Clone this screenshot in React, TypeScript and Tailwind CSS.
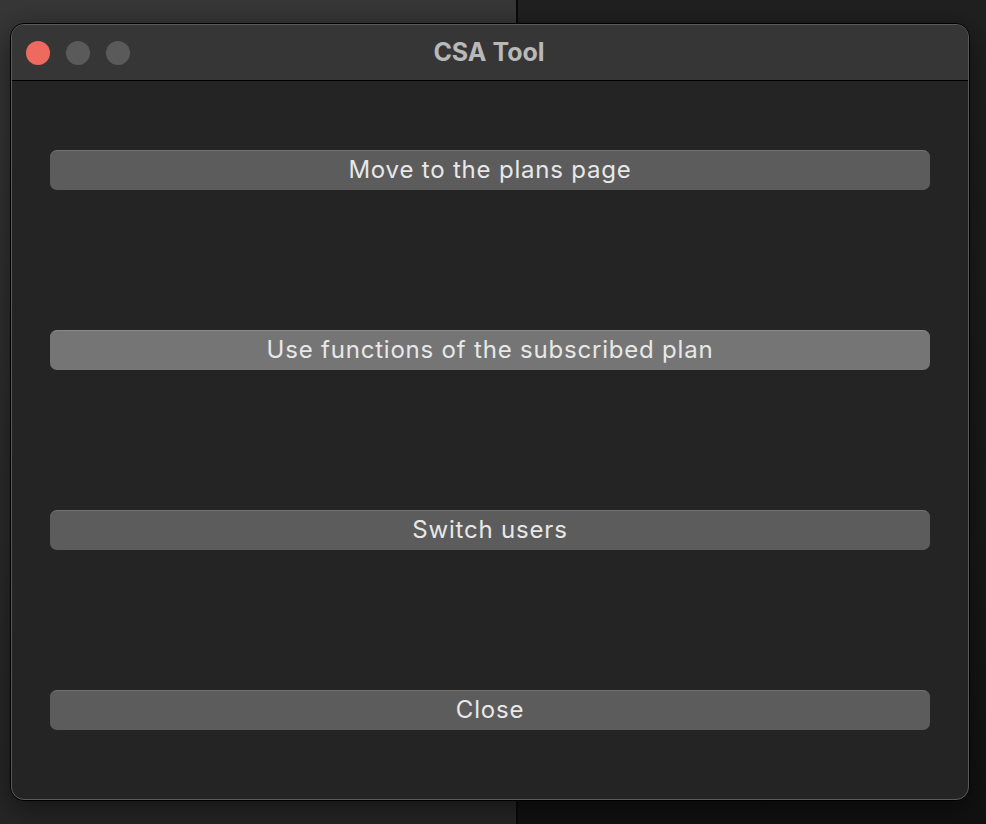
import React from 'react';

const buttons = [
  { label: 'Move to the plans page', active: false },
  { label: 'Use functions of the subscribed plan', active: true },
  { label: 'Switch users', active: false },
  { label: 'Close', active: false },
];

export default function App() {
  return (
    <div className="relative w-[986px] h-[824px] overflow-hidden bg-[#1a1a1a] font-['Inter','Liberation_Sans',sans-serif]">
      {/* desktop behind the window */}
      <div className="flex h-full">
        <div className="w-[516px] h-full bg-[linear-gradient(to_bottom,#373737,#2c2c2c_60%,#262626)]" />
        <div className="w-[2px] h-full bg-[#0a0a0a]" />
        <div className="flex-1 h-full bg-[linear-gradient(to_bottom,#202020,#181818_70%,#111111)]" />
      </div>

      {/* window */}
      <div className="absolute left-[10px] top-[23px] w-[960px] h-[778px] rounded-[14px] border border-black bg-[#242424] shadow-[0_8px_30px_rgba(0,0,0,0.5)]">
        <div className="flex flex-col h-full rounded-[13px] border border-[#5a5a5a] overflow-hidden">
          {/* title bar */}
          <div className="relative flex items-center h-[56px] shrink-0 bg-[#363636] border-b border-black">
            <div className="flex items-center gap-[16px] pl-[14px]">
              <span className="w-[24px] h-[24px] rounded-full bg-[#ee6a5f]" />
              <span className="w-[24px] h-[24px] rounded-full bg-[#5a5a5a]" />
              <span className="w-[24px] h-[24px] rounded-full bg-[#5a5a5a]" />
            </div>
            <div className="absolute inset-0 flex items-center justify-center pr-[2px] text-[25px] font-bold text-[#b9b9b9]">
              CSA Tool
            </div>
          </div>

          {/* body */}
          <div className="flex flex-1 flex-col gap-[140px] pt-[69px] px-[38px]">
            {buttons.map((b) => (
              <button
                key={b.label}
                className={`h-[40px] w-full shrink-0 rounded-[7px] border-t text-[24px] leading-none tracking-[0.8px] text-[#e8e8e8] pb-[2px] ${
                  b.active ? 'bg-[#757575] border-[#8a8a8a]' : 'bg-[#5c5c5c] border-[#727272]'
                }`}
              >
                {b.label}
              </button>
            ))}
          </div>
        </div>
      </div>
    </div>
  );
}
